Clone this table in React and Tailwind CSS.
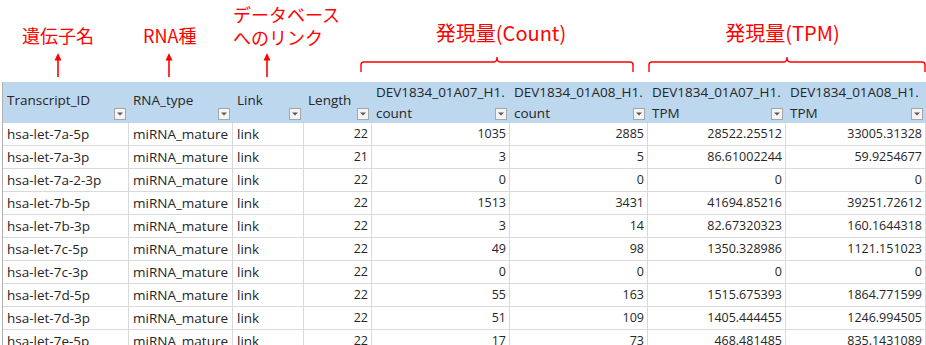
import React from "react";

const COLS = "grid grid-cols-[126px_104px_71px_68px_138px_138px_138px_140px]";

const rows = [
  ["hsa-let-7a-5p", "22", "1035", "2885", "28522.25512", "33005.31328"],
  ["hsa-let-7a-3p", "21", "3", "5", "86.61002244", "59.9254677"],
  ["hsa-let-7a-2-3p", "22", "0", "0", "0", "0"],
  ["hsa-let-7b-5p", "22", "1513", "3431", "41694.85216", "39251.72612"],
  ["hsa-let-7b-3p", "22", "3", "14", "82.67320323", "160.1644318"],
  ["hsa-let-7c-5p", "22", "49", "98", "1350.328986", "1121.151023"],
  ["hsa-let-7c-3p", "22", "0", "0", "0", "0"],
  ["hsa-let-7d-5p", "22", "55", "163", "1515.675393", "1864.771599"],
  ["hsa-let-7d-3p", "22", "51", "109", "1405.444455", "1246.994505"],
  ["hsa-let-7e-5p", "22", "17", "73", "468.481485", "835.1431089"],
];

function Drop() {
  return (
    <span className="absolute right-[3px] bottom-[3px] w-[12px] h-[12px] bg-[#f4f4f4] border border-[#a6a6a6] flex items-center justify-center">
      <svg width="6" height="4" viewBox="0 0 6 4">
        <path d="M0 0.5 L6 0.5 L3 3.5 Z" fill="#595959" />
      </svg>
    </span>
  );
}

function HeadSingle({ label }) {
  return (
    <div className="relative h-[41px] pl-[4px] pt-[9px] leading-[18px]">
      {label}
      <Drop />
    </div>
  );
}

function HeadDouble({ top, bottom }) {
  return (
    <div className="relative h-[41px] pl-[4px] leading-[18px] whitespace-nowrap overflow-visible">
      <div className="pt-[1px] h-[22px]">{top}</div>
      <div>{bottom}</div>
      <Drop />
    </div>
  );
}

function Arrow() {
  return (
    <svg width="10" height="24" viewBox="0 0 10 24" className="block">
      <path d="M5 6 L5 24" stroke="#f00" strokeWidth="1.6" />
      <path d="M1.5 7.5 L5 0 L8.5 7.5 Z" fill="#f00" />
    </svg>
  );
}

function Brace({ width }) {
  const w = width;
  const c = Math.round(w / 2);
  return (
    <svg width={w} height="18" viewBox={`0 0 ${w} 18`} className="block">
      <path
        d={`M1 16 L1 9 Q1 6 4 6 L${c - 3} 6 Q${c} 6 ${c} 1 Q${c} 6 ${c + 3} 6 L${w - 4} 6 Q${w - 1} 6 ${w - 1} 9 L${w - 1} 16`}
        fill="none"
        stroke="#f00"
        strokeWidth="1.4"
      />
    </svg>
  );
}

export default function App() {
  return (
    <div className="w-[926px] h-[345px] overflow-hidden bg-white">
      {/* annotation band */}
      <div className="relative h-[82px] text-[#f00] font-['Noto_Sans_CJK_JP',sans-serif]">
        <div className="absolute left-[22px] top-[24px] text-[18px] leading-[23px]">遺伝子名</div>
        <div className="absolute left-[53px] top-[53px]"><Arrow /></div>
        <div className="absolute left-[143px] top-[24px] text-[18px] leading-[23px]">RNA種</div>
        <div className="absolute left-[164px] top-[53px]"><Arrow /></div>
        <div className="absolute left-[233px] top-[3px] text-[18px] leading-[23px]">
          <div>データベース</div>
          <div>へのリンク</div>
        </div>
        <div className="absolute left-[262px] top-[53px]"><Arrow /></div>
        <div className="absolute left-[360px] w-[274px] top-[20px] flex flex-col items-center">
          <div className="text-[20px] leading-[26px] pl-[8px]">発現量(Count)</div>
          <div className="mt-[10px]"><Brace width={274} /></div>
        </div>
        <div className="absolute left-[647px] w-[279px] top-[20px] flex flex-col items-center">
          <div className="text-[20px] leading-[26px] pr-[8px]">発現量(TPM)</div>
          <div className="mt-[10px]"><Brace width={278} /></div>
        </div>
      </div>

      {/* table */}
      <div className="pl-[2px]">
        <div className="border-l border-[#b0b0b0] font-['Open_Sans',sans-serif] text-[#262626]">
          <div className={`${COLS} bg-[#bdd7ee] text-[13.5px]`}>
            <HeadSingle label="Transcript_ID" />
            <HeadSingle label="RNA_type" />
            <HeadSingle label="Link" />
            <HeadSingle label="Length" />
            <HeadDouble top="DEV1834_01A07_H1." bottom="count" />
            <HeadDouble top="DEV1834_01A08_H1." bottom="count" />
            <HeadDouble top="DEV1834_01A07_H1." bottom="TPM" />
            <HeadDouble top="DEV1834_01A08_H1." bottom="TPM" />
          </div>
          {rows.map((r, i) => (
            <div key={i} className={`${COLS} h-[23px] leading-[22px]`}>
              <div className="border-r border-b border-[#d9d9d9] pl-[4px] text-[13.5px] whitespace-nowrap">{r[0]}</div>
              <div className="border-r border-b border-[#d9d9d9] pl-[4px] text-[13.5px] whitespace-nowrap">miRNA_mature</div>
              <div className="border-r border-b border-[#d9d9d9] pl-[4px] text-[13.5px]">link</div>
              <div className="border-r border-b border-[#d9d9d9] pr-[3px] text-right text-[12.5px]">{r[1]}</div>
              <div className="border-r border-b border-[#d9d9d9] pr-[3px] text-right text-[12.5px]">{r[2]}</div>
              <div className="border-r border-b border-[#d9d9d9] pr-[3px] text-right text-[12.5px]">{r[3]}</div>
              <div className="border-r border-b border-[#d9d9d9] pr-[3px] text-right text-[12.5px]">{r[4]}</div>
              <div className="border-r border-b border-[#d9d9d9] pr-[3px] text-right text-[12.5px]">{r[5]}</div>
            </div>
          ))}
        </div>
      </div>
    </div>
  );
}
